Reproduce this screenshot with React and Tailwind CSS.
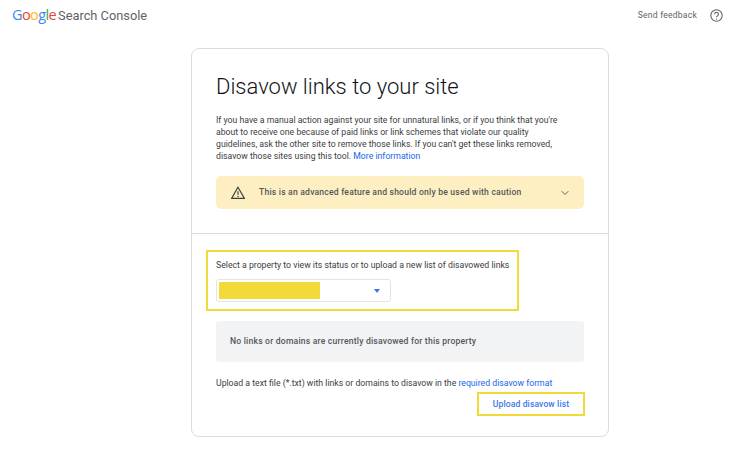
import React from 'react';
import { ChevronDown } from 'lucide-react';

const Header = () => (
    <header className="flex h-[30px] items-center justify-between pl-3 pr-[27px]">
        {/* Logo */}
        <div className="flex items-baseline gap-[2px] leading-none">
            <span className="font-['Open_Sans',sans-serif] text-[14.5px] tracking-[-0.6px]">
                <span className="text-[#4285f4]">G</span>
                <span className="text-[#ea4335]">o</span>
                <span className="text-[#fbbc05]">o</span>
                <span className="text-[#4285f4]">g</span>
                <span className="text-[#34a853]">l</span>
                <span className="text-[#ea4335]">e</span>
            </span>
            <span className="text-[12.8px] text-[#5f6368]">Search Console</span>
        </div>

        <div className="flex items-center gap-[13px]">
            <span className="text-[8.6px] tracking-[0.2px] text-[#5f6368]">Send feedback</span>
            <svg width="13" height="13" viewBox="0 0 24 24" fill="none" stroke="#5f6368" strokeWidth="2">
                <circle cx="12" cy="12" r="10.5" />
                <path d="M8.5 9.5a3.5 3.5 0 1 1 5.5 2.9c-1.3.8-2 1.5-2 3" />
                <path d="M12 17.5v2" />
            </svg>
        </div>
    </header>
);

const App = () => {
    return (
        <div className="h-[456px] w-[750px] overflow-hidden bg-white font-['Roboto',sans-serif] antialiased">
            <Header />

            <main className="ml-[191px] mt-[18px] h-[389px] w-[418px] rounded-lg border border-[#dadce0] bg-white">
                {/* Intro */}
                <section className="h-[185px] border-b border-[#dadce0] px-6 pt-[21px]">
                    <h1 className="text-[22px] font-[350] leading-[34px] text-[#111318]">Disavow links to your site</h1>
                    <p className="mt-[10px] text-[8.7px] leading-[12px] text-[#3c4043]">
                        If you have a manual action against your site for unnatural links, or if you think that you're
                        <br />
                        about to receive one because of paid links or link schemes that violate our quality
                        <br />
                        guidelines, ask the other site to remove those links. If you can't get these links removed,
                        <br />
                        disavow those sites using this tool. <span className="text-[#1a66e8]">More information</span>
                    </p>
                    <div className="mt-[14px] flex h-[33px] items-center rounded-[5px] bg-[#feefc3] pl-[15px] pr-[13px]">
                        <svg width="14" height="13" viewBox="0 0 24 22" fill="none" stroke="#3c4043" strokeWidth="2">
                            <path d="M12 2 L23 21 H1 Z" />
                            <path d="M12 9v6M12 16.5v2" />
                        </svg>
                        <span className="ml-[14px] flex-1 text-[8.6px] font-medium tracking-[0.2px] text-[#54575b]">
                            This is an advanced feature and should only be used with caution
                        </span>
                        <ChevronDown size={12} className="text-[#5f6368]" />
                    </div>
                </section>

                {/* Property select */}
                <section className="px-6 pt-[25px]">
                    <div className="relative">
                        <p className="text-[8.7px] leading-[12px] text-[#3c4043]">
                            Select a property to view its status or to upload a new list of disavowed links
                        </p>
                        <div className="mt-[8px] flex h-[23px] w-[175px] items-center rounded-[3px] border border-[#e3e4e6] pl-[2px] pr-[10px]">
                            <div className="h-[17px] w-[101px] bg-[#f2da38]" />
                            <div className="ml-auto h-0 w-0 border-x-[3.5px] border-t-[4px] border-x-transparent border-t-[#3b78e7]" />
                        </div>
                        {/* Highlight around the select */}
                        <div className="absolute -left-[10px] -top-[9px] h-[61px] w-[313px] border-2 border-[#f2da38]" />
                    </div>

                    <div className="mt-[19px] flex h-[41px] items-center rounded-[3px] bg-[#f1f3f4] pl-[14px]">
                        <span className="text-[8.6px] font-medium tracking-[0.2px] text-[#54575b]">
                            No links or domains are currently disavowed for this property
                        </span>
                    </div>

                    <p className="mt-[15px] text-[8.7px] leading-[12px] text-[#3c4043]">
                        Upload a text file (*.txt) with links or domains to disavow in the{' '}
                        <span className="text-[#1a66e8]">required disavow format</span>
                    </p>

                    <div className="mt-[3px] flex justify-end">
                        <button className="-mr-px h-[24px] w-[108px] border-2 border-[#f2da38] text-[8.6px] font-medium tracking-[0.1px] text-[#3b78e7]">
                            Upload disavow list
                        </button>
                    </div>
                </section>
            </main>
        </div>
    );
};

export default App;
